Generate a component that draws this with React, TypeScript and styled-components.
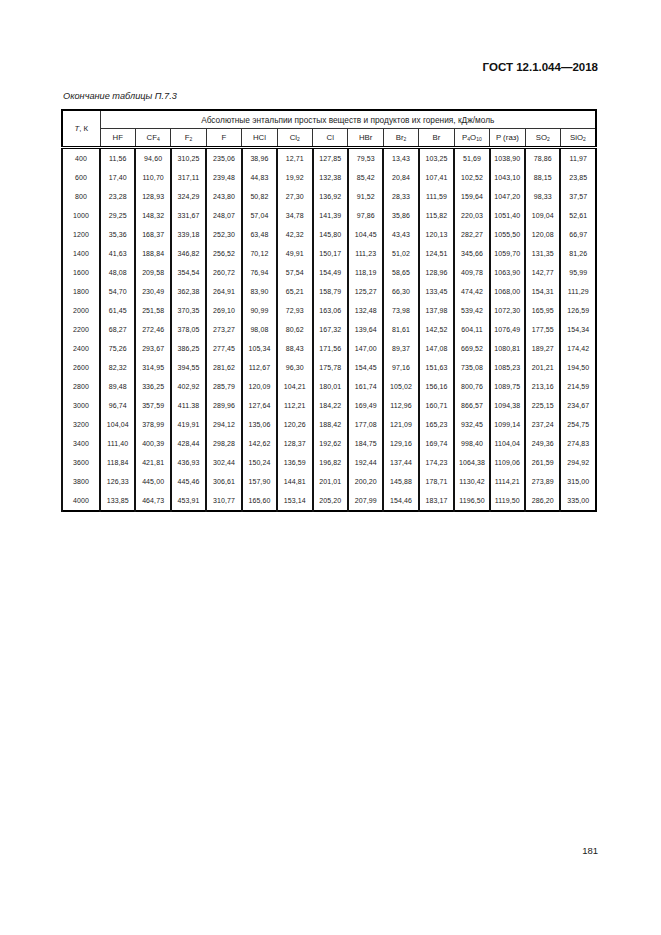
import styled, { createGlobalStyle } from "styled-components";

const COLUMNS: { base: string; sub?: string; tail?: string }[] = [
    { base: "HF" },
    { base: "CF", sub: "4" },
    { base: "F", sub: "2" },
    { base: "F" },
    { base: "HCl" },
    { base: "Cl", sub: "2" },
    { base: "Cl" },
    { base: "HBr" },
    { base: "Br", sub: "2" },
    { base: "Br" },
    { base: "P", sub: "4", tail: "O" },
    { base: "P (газ)" },
    { base: "SO", sub: "2" },
    { base: "SiO", sub: "2" },
];

const ROWS: [string, string[]][] = [
    ["400", ["11,56", "94,60", "310,25", "235,06", "38,96", "12,71", "127,85", "79,53", "13,43", "103,25", "51,69", "1038,90", "78,86", "11,97"]],
    ["600", ["17,40", "110,70", "317,11", "239,48", "44,83", "19,92", "132,38", "85,42", "20,84", "107,41", "102,52", "1043,10", "88,15", "23,85"]],
    ["800", ["23,28", "128,93", "324,29", "243,80", "50,82", "27,30", "136,92", "91,52", "28,33", "111,59", "159,64", "1047,20", "98,33", "37,57"]],
    ["1000", ["29,25", "148,32", "331,67", "248,07", "57,04", "34,78", "141,39", "97,86", "35,86", "115,82", "220,03", "1051,40", "109,04", "52,61"]],
    ["1200", ["35,36", "168,37", "339,18", "252,30", "63,48", "42,32", "145,80", "104,45", "43,43", "120,13", "282,27", "1055,50", "120,08", "66,97"]],
    ["1400", ["41,63", "188,84", "346,82", "256,52", "70,12", "49,91", "150,17", "111,23", "51,02", "124,51", "345,66", "1059,70", "131,35", "81,26"]],
    ["1600", ["48,08", "209,58", "354,54", "260,72", "76,94", "57,54", "154,49", "118,19", "58,65", "128,96", "409,78", "1063,90", "142,77", "95,99"]],
    ["1800", ["54,70", "230,49", "362,38", "264,91", "83,90", "65,21", "158,79", "125,27", "66,30", "133,45", "474,42", "1068,00", "154,31", "111,29"]],
    ["2000", ["61,45", "251,58", "370,35", "269,10", "90,99", "72,93", "163,06", "132,48", "73,98", "137,98", "539,42", "1072,30", "165,95", "126,59"]],
    ["2200", ["68,27", "272,46", "378,05", "273,27", "98,08", "80,62", "167,32", "139,64", "81,61", "142,52", "604,11", "1076,49", "177,55", "154,34"]],
    ["2400", ["75,26", "293,67", "386,25", "277,45", "105,34", "88,43", "171,56", "147,00", "89,37", "147,08", "669,52", "1080,81", "189,27", "174,42"]],
    ["2600", ["82,32", "314,95", "394,55", "281,62", "112,67", "96,30", "175,78", "154,45", "97,16", "151,63", "735,08", "1085,23", "201,21", "194,50"]],
    ["2800", ["89,48", "336,25", "402,92", "285,79", "120,09", "104,21", "180,01", "161,74", "105,02", "156,16", "800,76", "1089,75", "213,16", "214,59"]],
    ["3000", ["96,74", "357,59", "411.38", "289,96", "127,64", "112,21", "184,22", "169,49", "112,96", "160,71", "866,57", "1094,38", "225,15", "234,67"]],
    ["3200", ["104,04", "378,99", "419,91", "294,12", "135,06", "120,26", "188,42", "177,08", "121,09", "165,23", "932,45", "1099,14", "237,24", "254,75"]],
    ["3400", ["111,40", "400,39", "428,44", "298,28", "142,62", "128,37", "192,62", "184,75", "129,16", "169,74", "998,40", "1104,04", "249,36", "274,83"]],
    ["3600", ["118,84", "421,81", "436,93", "302,44", "150,24", "136,59", "196,82", "192,44", "137,44", "174,23", "1064,38", "1109,06", "261,59", "294,92"]],
    ["3800", ["126,33", "445,00", "445,46", "306,61", "157,90", "144,81", "201,01", "200,20", "145,88", "178,71", "1130,42", "1114,21", "273,89", "315,00"]],
    ["4000", ["133,85", "464,73", "453,91", "310,77", "165,60", "153,14", "205,20", "207,99", "154,46", "183,17", "1196,50", "1119,50", "286,20", "335,00"]],
];

const App = () => {
    return (
        <>
            <GlobalStyle />
            <Page>
                <Standard>ГОСТ 12.1.044—2018</Standard>
                <Caption>Окончание таблицы П.7.3</Caption>
                <Table>
                    <colgroup>
                        <col style={{ width: 38 }} />
                        {COLUMNS.map((_, i) => (
                            <col key={i} />
                        ))}
                    </colgroup>
                    <thead>
                        <tr>
                            <HeadCell rowSpan={2}>
                                <i>T</i>, К
                            </HeadCell>
                            <TitleCell colSpan={COLUMNS.length}>
                                Абсолютные энтальпии простых веществ и продуктов их горения, кДж/моль
                            </TitleCell>
                        </tr>
                        <tr>
                            {COLUMNS.map((c, i) => (
                                <HeadCell key={i}>
                                    {c.base}
                                    {c.sub ? <Sub>{c.sub}</Sub> : null}
                                    {c.tail ? (
                                        <>
                                            {c.tail}
                                            <Sub>10</Sub>
                                        </>
                                    ) : null}
                                </HeadCell>
                            ))}
                        </tr>
                    </thead>
                    <tbody>
                        {ROWS.map(([t, values]) => (
                            <Row key={t}>
                                <Cell>{t}</Cell>
                                {values.map((v, i) => (
                                    <Cell key={i}>{v}</Cell>
                                ))}
                            </Row>
                        ))}
                    </tbody>
                </Table>
                <PageNumber>181</PageNumber>
            </Page>
        </>
    );
};

export default App;

const GlobalStyle = createGlobalStyle`
    html, body {
        margin: 0;
        padding: 0;
        background: #ffffff;
    }
    body {
        font-family: "Liberation Sans", Arial, sans-serif;
        color: #1a1a1a;
    }
`;

const Page = styled.div`
    width: 661px;
    height: 935px;
    box-sizing: border-box;
    padding: 60px 63px 0 61px;
    display: flex;
    flex-direction: column;
    background: #ffffff;
`;

const Standard = styled.div`
    align-self: flex-end;
    font-size: 11.5px;
    font-weight: 700;
    line-height: 14px;
    color: #111;
`;

const Caption = styled.div`
    margin-top: 16px;
    padding-left: 2px;
    font-size: 9.2px;
    font-style: italic;
    line-height: 13px;
    color: #222;
`;

const Table = styled.table`
    margin-top: 6px;
    width: 536px;
    table-layout: fixed;
    border-collapse: collapse;
    border: 2px solid #000;
    font-size: 7px;
    line-height: 8px;
    color: #1c1c1c;
`;

const HeadCell = styled.th`
    height: 17px;
    padding: 0;
    border: 1px solid #333;
    border-bottom: 3px double #000;
    font-weight: 400;
    font-size: 7.8px;
    text-align: center;
    vertical-align: middle;
    white-space: nowrap;
`;

const TitleCell = styled.th`
    height: 17px;
    padding: 0;
    border: 1px solid #333;
    font-weight: 400;
    font-size: 8.3px;
    text-align: center;
    vertical-align: middle;
    white-space: nowrap;
`;

const Sub = styled.sub`
    font-size: 5px;
    vertical-align: -1px;
    line-height: 0;
`;

const Row = styled.tr`
    height: 19px;
`;

const Cell = styled.td`
    height: 19px;
    padding: 0;
    border-left: 2px solid #111;
    text-align: center;
    vertical-align: middle;
    white-space: nowrap;
    letter-spacing: 0.1px;
`;

const PageNumber = styled.div`
    margin-top: auto;
    margin-bottom: 78px;
    align-self: flex-end;
    font-size: 9.5px;
    line-height: 12px;
    color: #222;
`;
